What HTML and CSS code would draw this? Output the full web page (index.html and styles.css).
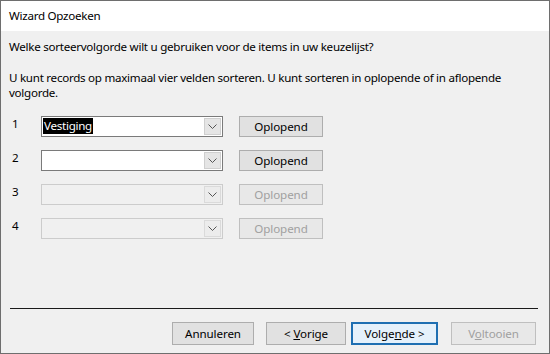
FILE: index.html
```html
<!DOCTYPE html>
<html>
<head>
<meta charset="utf-8">
<link rel="stylesheet" href="styles.css">
</head>
<body>
<div class="window">
  <div class="titlebar">Wizard Opzoeken</div>
  <div class="content">
    <p class="q">Welke sorteervolgorde wilt u gebruiken voor de items in uw keuzelijst?</p>
    <p class="info">U kunt records op maximaal vier velden sorteren. U kunt sorteren in oplopende of in aflopende volgorde.</p>
    <div class="rows">
      <div class="row">
        <span class="num">1</span>
        <div class="combo"><span class="val"><span class="sel">Vestiging</span></span><span class="arrow"><svg width="9" height="5" viewBox="0 0 9 5"><path d="M0.5 0.5 L4.5 4.5 L8.5 0.5" fill="none" stroke="#555" stroke-width="1"/></svg></span></div>
        <button class="btn">Oplopend</button>
      </div>
      <div class="row">
        <span class="num">2</span>
        <div class="combo"><span class="val"></span><span class="arrow"><svg width="9" height="5" viewBox="0 0 9 5"><path d="M0.5 0.5 L4.5 4.5 L8.5 0.5" fill="none" stroke="#555" stroke-width="1"/></svg></span></div>
        <button class="btn">Oplopend</button>
      </div>
      <div class="row">
        <span class="num">3</span>
        <div class="combo disabled"><span class="val"></span><span class="arrow"><svg width="9" height="5" viewBox="0 0 9 5"><path d="M0.5 0.5 L4.5 4.5 L8.5 0.5" fill="none" stroke="#555" stroke-width="1"/></svg></span></div>
        <button class="btn disabled">Oplopend</button>
      </div>
      <div class="row">
        <span class="num">4</span>
        <div class="combo disabled"><span class="val"></span><span class="arrow"><svg width="9" height="5" viewBox="0 0 9 5"><path d="M0.5 0.5 L4.5 4.5 L8.5 0.5" fill="none" stroke="#555" stroke-width="1"/></svg></span></div>
        <button class="btn disabled">Oplopend</button>
      </div>
    </div>
  </div>
  <div class="footer">
    <div class="sep"></div>
    <div class="buttons">
      <button class="btn b-cancel">Annuleren</button>
      <button class="btn b-prev">&lt; <u>V</u>orige</button>
      <button class="btn b-next">Volge<u>n</u>de &gt;</button>
      <button class="btn disabled b-last">V<u>o</u>ltooien</button>
    </div>
  </div>
</div>
</body>
</html>
```
FILE: styles.css
```css
* { box-sizing: border-box; }
html, body { margin: 0; padding: 0; }
body {
  width: 550px;
  height: 354px;
  overflow: hidden;
  font-family: "Noto Sans", "Open Sans", sans-serif;
  font-size: 11.6px;
  letter-spacing: -0.27px;
  color: #000;
  background: #f0f0f0;
}
.window {
  width: 550px;
  height: 354px;
  border: 1px solid #6e6e6e;
  background: #f0f0f0;
  display: flex;
  flex-direction: column;
}
.titlebar {
  height: 30px;
  background: #fff;
  padding: 7px 0 0 8px;
  line-height: 16px;
}
.content {
  flex: 1;
  padding: 0 8px;
}
.q {
  margin: 8px 0 0 0;
  line-height: 16px;
}
.info {
  margin: 15px 0 0 0;
  line-height: 15px;
  width: 500px;
}
.rows {
  margin-top: 16px;
  display: flex;
  flex-direction: column;
  gap: 13px;
}
.row {
  display: flex;
  align-items: center;
  height: 21px;
}
.num {
  width: 32px;
  padding-left: 3px;
  line-height: 16px;
  margin-top: 0;
  align-self: flex-start;
}
.combo {
  width: 182px;
  height: 21px;
  border: 1px solid #7a7a7a;
  background: #fff;
  display: flex;
  align-items: stretch;
}
.combo.disabled {
  border-color: #cccccc;
  background: #f0f0f0;
}
.val {
  flex: 1;
  padding: 1px 0 0 1px;
  line-height: 16px;
}
.sel {
  background: #000;
  color: #fff;
  display: inline-block;
  padding: 0 1px;
}
.arrow {
  width: 17px;
  margin: 1px;
  background: #e5e5e5;
  border: 1px solid #cfcfcf;
  display: flex;
  align-items: center;
  justify-content: center;
}
.combo.disabled .arrow {
  background: #ececec;
  border-color: #dadada;
}
.btn {
  font-family: inherit;
  font-size: 11.6px;
  letter-spacing: -0.1px;
  width: 84px;
  height: 21px;
  margin-left: 16px;
  background: #e1e1e1;
  border: 1px solid #adadad;
  color: #000;
  padding: 0;
  line-height: 16px;
}
.btn.disabled {
  color: #a0a0a0;
  border-color: #bfbfbf;
  background: #e8e8e8;
}
.footer {
  padding: 0 11px 8px 9px;
}
.sep {
  height: 1px;
  background: #1a1a1a;
  margin-bottom: 13px;
}
.buttons {
  display: flex;
  justify-content: flex-end;
  padding-right: 2px;
}
.buttons .btn { height: 23px; }
.b-cancel { width: 82px; margin-left: 0; }
.b-prev { width: 80px; margin-left: 12px; }
.b-next {
  width: 87px;
  margin-left: 5px;
  border: 2px solid #1f6fb2;
  background: #e5f1fb;
}
.buttons .b-last { width: 85px; margin-left: 13px; }
```
